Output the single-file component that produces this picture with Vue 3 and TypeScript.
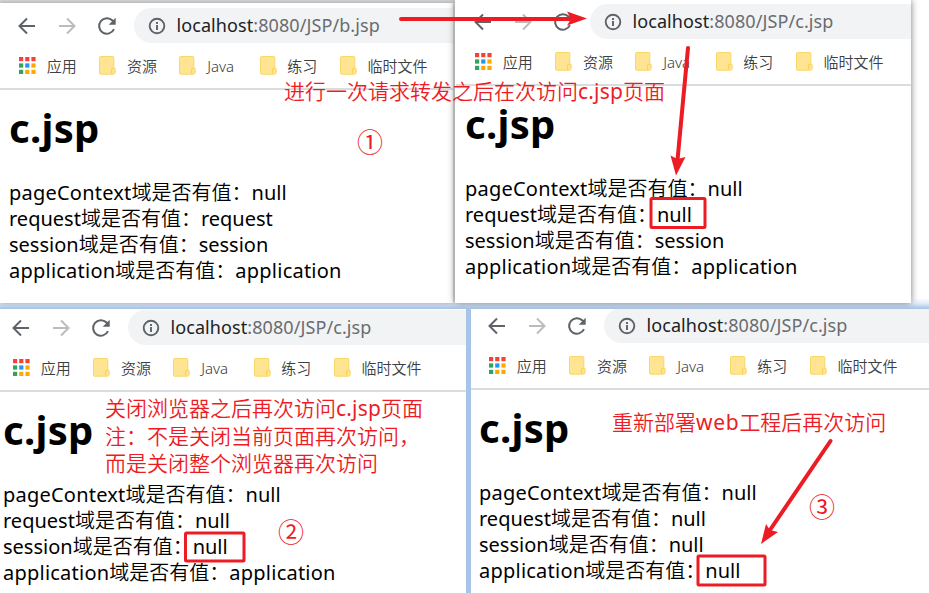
<script setup lang="ts">
interface Field { name: string; value: string }
interface Pane { id: string; page: string; fields: Field[] }

const tracking: Record<string, string> = {
  pageContext: '0.22px',
  application: '0.23px',
}

function fields(request: string, session: string, application: string): Field[] {
  return [
    { name: 'pageContext', value: 'null' },
    { name: 'request', value: request },
    { name: 'session', value: session },
    { name: 'application', value: application },
  ]
}

const panes: Pane[] = [
  { id: 'first', page: 'b', fields: fields('request', 'session', 'application') },
  { id: 'second', page: 'c', fields: fields('null', 'session', 'application') },
  { id: 'third', page: 'c', fields: fields('null', 'null', 'application') },
  { id: 'fourth', page: 'c', fields: fields('null', 'null', 'null') },
]

const folders: string[] = ['资源', 'Java', '练习', '临时文件']
const dots: string[] = ['#f44336', '#f44336', '#f44336', '#34a35a', '#2196f3', '#fbab00', '#34a35a', '#fbab00', '#fbab00']
</script>

<template>
  <div class="canvas">
    <section v-for="pane in panes" :key="pane.id" class="window" :class="pane.id">
      <div class="inner">
        <header class="toolbar">
          <span class="nav"><svg viewBox="0 0 24 24"><path d="M20 12H5M12 4.5 4.5 12l7.5 7.5" /></svg></span>
          <span class="nav off"><svg viewBox="0 0 24 24"><path d="M4 12h15M12 4.5l7.5 7.5-7.5 7.5" /></svg></span>
          <span class="nav"><svg viewBox="0 0 24 24"><path d="M19 15.2A7.8 7.8 0 1 1 17.5 6.5L19 8" /><path class="solid" d="M20.7 3.8v7h-7z" /></svg></span>
          <div class="address">
            <svg class="info" viewBox="0 0 18 18"><circle cx="9" cy="9" r="7.3" /><path d="M9 8v5M9 5v2" /></svg>
            <span class="url"><b>localhost</b>:8080/JSP/{{ pane.page }}.jsp</span>
          </div>
        </header>
        <nav class="bookmarks">
          <span class="mark">
            <svg class="apps" viewBox="0 0 17 17">
              <rect v-for="(c, i) in dots" :key="i" :x="(i % 3) * 6.2" :y="Math.floor(i / 3) * 6.4" width="4.2" height="4.2" :fill="c" />
            </svg>应用
          </span>
          <span v-for="name in folders" :key="name" class="mark">
            <svg class="folder" viewBox="0 0 17 19">
              <path d="M1.5.5h12.3q1 0 1 1V12h.2q1.200 0 1.200 1.200v3.100q0 1.900-1.900 1.900H1.500q-1 0-1-1V1.500q0-1 1-1z" fill="#ffe492" stroke="#f7d768" />
              <path d="M12.600 17.500v-4q0-1.200 1.200-1.200h1" fill="none" stroke="#f5cf50" />
            </svg>{{ name }}
          </span>
        </nav>
        <main class="page">
          <h1>c.jsp</h1>
          <p v-for="f in pane.fields" :key="f.name">
            <span :style="{ letterSpacing: tracking[f.name] }">{{ f.name }}</span><span class="han">域是否有值：</span><span :style="{ letterSpacing: tracking[f.value] }">{{ f.value }}</span>
          </p>
        </main>
      </div>
    </section>

    <svg class="overlay" viewBox="0 0 929 593">
      <g class="stroke">
        <path d="M401 19H570M688 48 677.500 160M830.500 441 770 530" />
        <rect x="651" y="198.500" width="54" height="29" rx="1" />
        <rect x="185.500" y="533" width="58.500" height="28" rx="1" />
        <rect x="698" y="556" width="67" height="29" rx="1" />
      </g>
      <g class="heads">
        <path d="M587 18.500 567 11.500 571 19 567 25.500z" />
        <path d="M676 175.500 670.500 155.500 677.500 159 685.500 157z" />
        <path d="M761 544 766 524 770 530 778 532z" />
      </g>
    </svg>
    <div class="note n1">进行一次请求转发之后在次访问<span class="lat">c.jsp</span>页面</div>
    <div class="note n2">关闭浏览器之后再次访问<span class="lat">c.jsp</span>页面<br>注：不是关闭当前页面再次访问，<br>而是关闭整个浏览器再次访问</div>
    <div class="note n3">重新部署<span class="lat web">web</span>工程后再次访问</div>
    <span class="num c1">①</span>
    <span class="num c2">②</span>
    <span class="num c3">③</span>
  </div>
</template>

<style>
body { overflow: hidden; }
</style>

<style scoped>
.canvas {
  position: relative;
  width: 929px;
  height: 593px;
  overflow: hidden;
  background:
    linear-gradient(#d9d9d9, #d9d9d9) 0 0 / 456px 3px no-repeat,
    linear-gradient(#fff 0 298px, #e4eefb 303px, #a9c9ef 309px);
  font-family: "Noto Sans", "Noto Sans CJK SC", sans-serif;
}
.window { position: absolute; overflow: hidden; background: #fff; }
.first { left: 0; top: 3px; width: 453px; height: 300px; box-shadow: 0 0 5px #999; }
.second { left: 455px; top: 0; width: 456px; height: 303px; box-shadow: 0 0 7px #777; }
.third { left: 0; top: 309px; width: 466px; height: 284px; box-shadow: 0 0 5px #a5bddb; }
.fourth { left: 471px; top: 309px; width: 458px; height: 284px; box-shadow: 0 0 5px #a5bddb; }
.inner { width: 500px; }
.first .inner { margin: -3px 0 0 0; }
.second .inner { margin: -4px 0 0 1px; }
.third .inner { margin: -7px 0 0 -6px; }
.fourth .inner { margin: -9px 0 0 -1px; }

.toolbar { display: flex; height: 35px; padding: 8px 0 0 7px; }
.nav { display: flex; width: 40px; align-items: center; justify-content: center; }
.nav svg { width: 24px; height: 24px; fill: none; stroke: #5f6368; stroke-width: 2; }
.nav .solid { fill: #5f6368; stroke: none; }
.nav.off svg { stroke: #babcbe; }
.address {
  display: flex;
  flex: 1;
  align-items: center;
  gap: 11px;
  margin-left: 7px;
  padding-left: 13.500px;
  border-radius: 18px 0 0 18px;
  background: #f1f3f4;
}
.info { width: 18px; height: 18px; fill: none; stroke: #5f6368; stroke-width: 1.9; }
.url { padding-bottom: 1px; font-size: 18px; line-height: 34px; letter-spacing: 0.08px; color: #696c70; white-space: nowrap; }
.url b { font-weight: 400; color: #202124; }

.bookmarks { display: flex; height: 45px; padding-left: 19px; border-bottom: 2px solid #dadce0; }
.mark { display: flex; width: 80.200px; flex: none; align-items: center; font-size: 15px; color: #3c4043; white-space: nowrap; font-weight: 350; }
.mark svg { flex: none; width: 17px; margin-right: 10.800px; }
.apps { height: 17px; }
.folder { height: 19px; }

.page { padding: 11px 9px 0; color: #000; font-size: 20px; }
h1 { height: 79px; margin: 0; font-size: 40px; font-weight: 700; line-height: 54px; letter-spacing: 0.3px; }
p { height: 26px; margin: 0; line-height: 26px; white-space: nowrap; }
.han { font-weight: 350; }

.overlay { position: absolute; inset: 0; width: 929px; height: 593px; }
.stroke { fill: none; stroke: #ed1c24; stroke-width: 3; stroke-linecap: round; }
.stroke path { stroke-width: 4; }
.heads { fill: #ed1c24; }
.note { position: absolute; color: #ed1c24; font-size: 21px; font-weight: 350; line-height: 27.500px; white-space: nowrap; }
.n1 { left: 284px; top: 78px; }
.n2 { left: 105px; top: 395px; }
.n3 { left: 612px; top: 409px; }
.lat { font-weight: 400; letter-spacing: 0.2px; }
.web { letter-spacing: 0.7px; }
.num { position: absolute; color: #ed1c24; font-size: 26px; line-height: 30px; font-weight: 400; }
.c1 { left: 357px; top: 127px; }
.c2 { left: 278px; top: 517px; }
.c3 { left: 809px; top: 492px; }
</style>
